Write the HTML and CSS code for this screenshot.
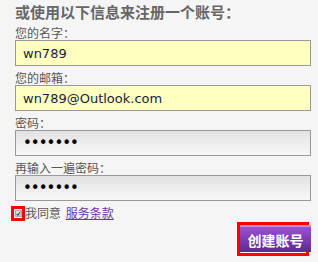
FILE: index.html
```html
<!DOCTYPE html>
<html lang="zh-CN">

<head>
    <meta charset="UTF-8" />
    <meta name="viewport" content="width=device-width, initial-scale=1.0" />
    <title>注册账号</title>
    <link rel="stylesheet" href="styles.css">
</head>

<body>
    <main class="signup">
        <h2>或使用以下信息来注册一个账号：</h2>
        <form class="form">
            <label class="field">
                <span>您的名字：</span>
                <input class="filled" type="text" value="wn789">
            </label>
            <label class="field">
                <span>您的邮箱：</span>
                <input class="filled" type="text" value="wn789@Outlook.com">
            </label>
            <label class="field">
                <span>密码：</span>
                <input class="pass" type="password" value="1234567">
            </label>
            <label class="field">
                <span>再输入一遍密码：</span>
                <input class="pass" type="password" value="1234567">
            </label>
            <div class="agree">
                <span class="mark">
                    <span class="check">
                        <svg width="7" height="7" viewBox="0 0 7 7">
                            <path d="M1 4.5 L2.5 6 L6 1" fill="none" stroke="#222" stroke-width="1.4" />
                        </svg>
                    </span>
                </span>
                <span>我同意 <a href="#">服务条款</a></span>
            </div>
            <div class="actions">
                <span class="mark-btn">
                    <button type="button">创建账号</button>
                </span>
            </div>
        </form>
    </main>
</body>

</html>
```

FILE: styles.css
```css
* {
    padding: 0;
    margin: 0;
    box-sizing: border-box;
}

body {
    font-family: "Noto Sans CJK SC", "DejaVu Sans", sans-serif;
    background-color: #f5f5f5;
    color: #555;
}

.signup {
    padding: 2px 7px 0 15px;
}

.signup h2 {
    font-size: 15px;
    line-height: 20px;
    color: #666;
    margin-bottom: 4px;
}

.field {
    display: flex;
    flex-direction: column;
    margin-bottom: 5px;
}

.field span {
    font-size: 12px;
    line-height: 14px;
    height: 14px;
}

.field input {
    height: 26px;
    width: 100%;
    border: 1px solid #999;
    padding: 0 7px;
    font-family: "DejaVu Sans", Verdana, sans-serif;
    font-size: 13px;
    color: #1c1c3c;
    outline: none;
}

.filled {
    background-color: #ffffc0;
}

.field .pass {
    background: linear-gradient(#e2e2e2, #f8f8f8);
    color: #000;
    font-size: 15px;
    letter-spacing: -1px;
}

.agree {
    display: flex;
    align-items: center;
    font-size: 12px;
    line-height: 16px;
    color: #555;
    margin-top: -1px;
    margin-left: -4px;
}

.agree a {
    color: #6a35a8;
    margin-left: 2px;
}

.mark {
    display: flex;
    align-items: center;
    justify-content: center;
    width: 14px;
    height: 15px;
    border: 3px solid #f00;
}

.check {
    display: flex;
    align-items: center;
    justify-content: center;
    width: 7px;
    height: 7px;
    background: linear-gradient(#eee, #bbb);
    border: 1px solid #aaa;
}

.actions {
    display: flex;
    justify-content: flex-end;
    margin-top: 1px;
    margin-right: 2px;
}

.mark-btn {
    display: flex;
    border: 3px solid #f00;
    width: 72px;
    height: 34px;
}

.mark-btn button {
    width: 71px;
    height: 27px;
    flex-shrink: 0;
    border: none;
    border-top: 2px solid #c58ae8;
    background: linear-gradient(#9d50d2, #5a2a8e);
    color: #fff;
    font-family: "Noto Sans CJK SC", sans-serif;
    font-size: 14px;
    font-weight: bold;
    cursor: pointer;
}
```
